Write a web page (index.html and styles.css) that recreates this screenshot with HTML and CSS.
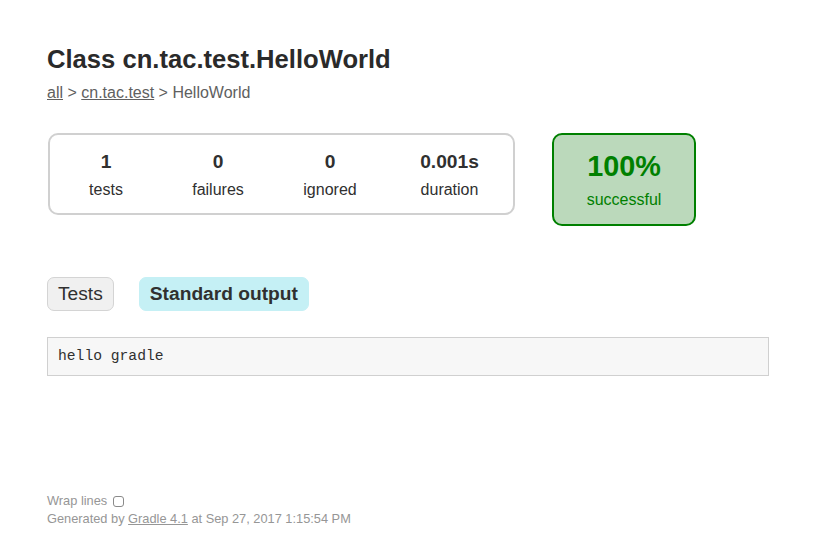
FILE: index.html
```html
<!DOCTYPE html>
<html>
<head>
<meta charset="utf-8">
<title>Test results - Class cn.tac.test.HelloWorld</title>
<link rel="stylesheet" href="styles.css">
</head>
<body>
<div class="content">
  <h1 class="title">Class cn.tac.test.HelloWorld</h1>
  <div class="breadcrumbs"><a href="#">all</a> &gt; <a href="#">cn.tac.test</a> &gt; HelloWorld</div>
  <div class="summary">
    <div class="summary-group">
      <div class="info-box"><div class="counter">1</div><p>tests</p></div>
      <div class="info-box"><div class="counter">0</div><p>failures</p></div>
      <div class="info-box"><div class="counter">0</div><p>ignored</p></div>
      <div class="info-box info-duration"><div class="counter">0.001s</div><p>duration</p></div>
    </div>
    <div class="success-rate">
      <div class="percent">100%</div>
      <p>successful</p>
    </div>
  </div>
  <ul class="tab-links">
    <li class="tab-link"><a href="#">Tests</a></li>
    <li class="tab-link selected"><a href="#">Standard output</a></li>
  </ul>
  <div class="tab">
    <pre class="code">hello gradle</pre>
  </div>
  <div class="footer">
    <div class="wrap-row"><label class="wrap-label" for="wrap">Wrap lines</label><input class="wrap-toggle" id="wrap" type="checkbox"></div>
    <div class="generated">Generated by <a href="#">Gradle 4.1</a> at Sep 27, 2017 1:15:54 PM</div>
  </div>
</div>
</body>
</html>
```

FILE: styles.css
```css
html, body {
  margin: 0;
  padding: 0;
  background: #ffffff;
}
body {
  font-family: "Liberation Sans", Arial, Helvetica, sans-serif;
  font-size: 16px;
  color: #303030;
}
a {
  color: #303030;
}
.content {
  padding: 45px 50px 20px 47px;
}
.title {
  font-size: 25.6px;
  font-weight: bold;
  margin: 0 0 10px 0;
  color: #2a2a2a;
  white-space: nowrap;
}
.breadcrumbs, .breadcrumbs a {
  color: #606060;
}
.summary {
  display: flex;
  align-items: flex-start;
  margin-top: 31px;
  margin-left: 1px;
}
.summary-group {
  display: flex;
  border: 2px solid #d0d0d0;
  border-radius: 10px;
}
.info-box {
  width: 110px;
  padding: 16px 1px 14px;
  text-align: center;
}
.info-duration {
  width: 125px;
}
.info-box p, .success-rate p {
  margin: 0;
}
.counter {
  font-size: 19.2px;
  font-weight: bold;
  margin-bottom: 8px;
}
.success-rate {
  width: 140px;
  margin-left: 37px;
  padding: 15px 0;
  text-align: center;
  border: 2px solid #008000;
  border-radius: 10px;
  background: #bbd9bb;
  color: #008000;
}
.percent {
  font-size: 28.8px;
  font-weight: bold;
  margin-bottom: 8px;
}
.tab-links {
  display: flex;
  list-style: none;
  margin: 51px 0 0 0;
  padding: 0;
  gap: 25px;
}
.tab-link {
  padding: 5px 10px;
  border: 1px solid #d4d4d4;
  border-radius: 7px;
  background: #f0f0f0;
}
.tab-link a {
  font-size: 19.2px;
  text-decoration: none;
  display: block;
}
.tab-link.selected {
  background: #c5f0f5;
  border-color: #c5f0f5;
}
.tab-link.selected a {
  font-weight: bold;
}
.tab {
  margin-top: 26px;
}
.code {
  box-sizing: border-box;
  width: 722px;
  margin: 0;
  padding: 10px;
  font-family: "Liberation Mono", "Courier New", monospace;
  font-size: 14.67px;
  line-height: 17px;
  background: #f7f7f7;
  border: 1px solid #d0d0d0;
  color: #303030;
}
.footer {
  margin-top: 116px;
  font-size: 12.8px;
  color: #969696;
  white-space: nowrap;
}
.footer a {
  color: #969696;
}
.wrap-row {
  display: flex;
  align-items: center;
  height: 17px;
}
.wrap-toggle {
  appearance: none;
  -webkit-appearance: none;
  width: 11px;
  height: 11px;
  margin: 2px 0 0 6px;
  border: 1px solid #8a8a8a;
  border-radius: 3px;
  background: #ffffff;
}
.generated {
  margin-top: 2px;
}
```
